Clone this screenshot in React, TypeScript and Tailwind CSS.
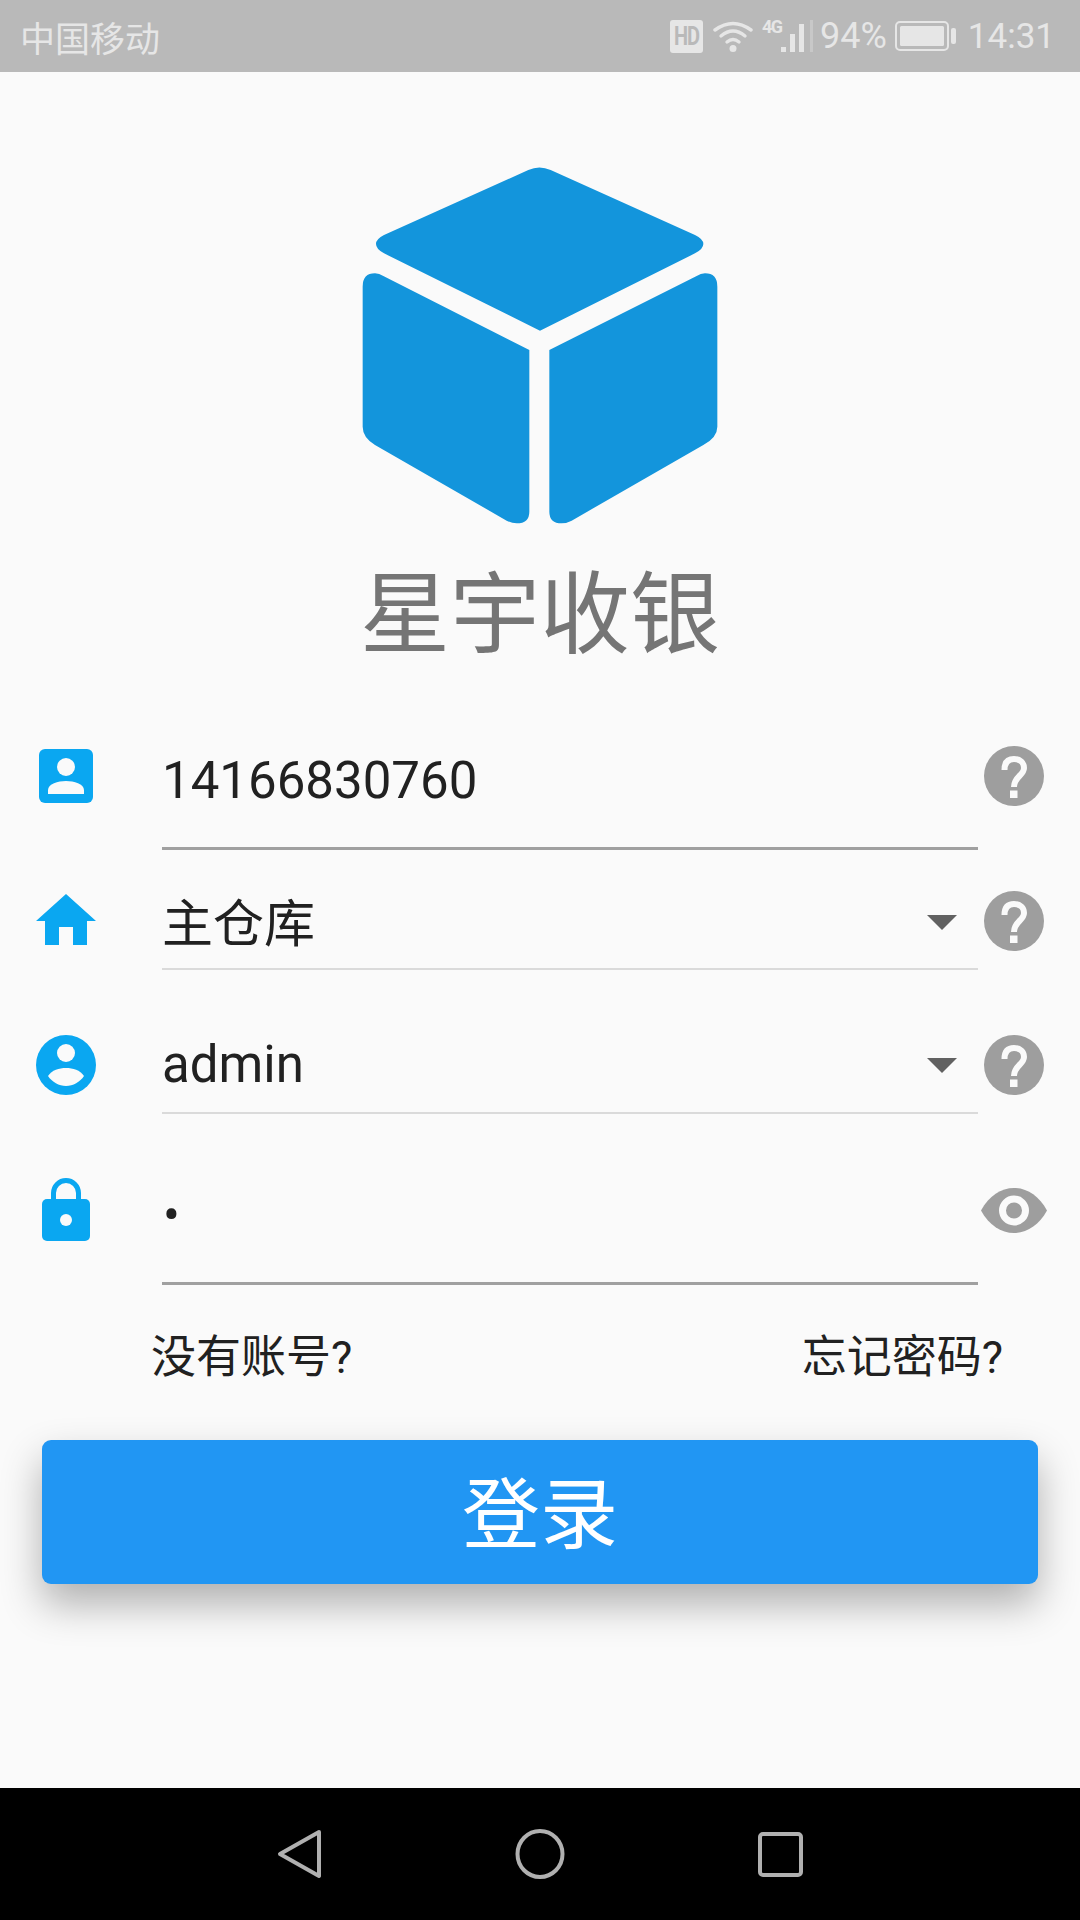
const cjk = "font-['Roboto','Noto_Sans_CJK_SC',sans-serif]";

function Question() {
  return (
    <svg width="60" height="60" viewBox="0 0 60 60" className="shrink-0">
      <circle cx="30" cy="30" r="30" fill="#9e9e9e" />
      <path d="M20.5 24C20.5 16 24.5 13 30 13C36 13 40 16.5 40 22C40 29.5 30 30.5 30 41" fill="none" stroke="#fafafa" strokeWidth="6" />
      <rect x="26" y="44.5" width="7.5" height="7.5" fill="#fafafa" />
    </svg>
  );
}

function Arrow() {
  return (
    <svg width="30" height="15" viewBox="0 0 30 15" className="shrink-0">
      <path d="M0 0H30L15 15Z" fill="#616161" />
    </svg>
  );
}

function Logo() {
  return (
    <svg width="400" height="400" viewBox="0 0 1200 1200">
      <g fill="#1395dc">
        <path d="M565 60Q598 45 632 60L1065 255Q1090 267 1090 282Q1090 297 1065 310L600 542L132 310Q108 297 108 282Q108 267 132 255Z" />
        <path d="M68 410Q68 370 105 370Q118 370 130 378L568 600V1085Q568 1120 530 1120Q515 1120 500 1112L105 885Q68 862 68 830Z" />
        <path d="M1132 410Q1132 370 1095 370Q1082 370 1070 378L628 600V1085Q628 1120 665 1120Q680 1120 695 1112L1090 885Q1132 862 1132 830Z" />
      </g>
    </svg>
  );
}

export default function App() {
  return (
    <div className={`flex h-[1920px] w-[1080px] flex-col overflow-hidden bg-[#fafafa] ${cjk}`}>
      <div className="flex h-[72px] shrink-0 items-center bg-[#b9b9b9] text-[#e6e6e6]">
        <span className="ml-[20px] text-[35px] leading-none font-['Noto_Sans_CJK_SC',sans-serif]">中国移动</span>
        <div className="ml-auto flex items-center">
          <div className="flex h-[33px] w-[33px] items-center justify-center rounded-[3px] bg-[#e6e6e6] font-['Roboto',sans-serif] text-[20px] font-bold leading-none tracking-[-1px] text-[#b9b9b9]">
            <span className="inline-block scale-y-125">HD</span>
          </div>
          <svg width="40" height="32" viewBox="0 0 40 32" className="ml-[10px]">
            <g fill="none" stroke="#e6e6e6" strokeWidth="3.4" strokeLinecap="round">
              <path d="M2 10Q20 -3 38 10" />
              <path d="M8 16Q20 6 32 16" />
              <path d="M14 22Q20 17 26 22" />
            </g>
            <circle cx="20" cy="28.5" r="3.5" fill="#e6e6e6" />
          </svg>
          <div className="relative ml-[9px] h-[36px] w-[52px]">
            <span className="absolute left-0 top-0 font-['Roboto',sans-serif] text-[18px] font-bold leading-none tracking-[-1.5px]">4G</span>
            <svg width="33" height="32" viewBox="0 0 33 32" className="absolute bottom-[2px] right-0">
              <rect x="0" y="27" width="5" height="5" fill="#e6e6e6" />
              <rect x="9" y="14" width="5" height="18" fill="#e6e6e6" />
              <rect x="18" y="4" width="5" height="28" fill="#e6e6e6" />
              <rect x="29" y="0" width="3" height="32" fill="#c8c8c8" />
            </svg>
          </div>
          <span className="ml-[6px] font-['Roboto',sans-serif] text-[36px] leading-none">94%</span>
          <svg width="62" height="30" viewBox="0 0 62 30" className="ml-[8px]">
            <rect x="1" y="1" width="52" height="28" rx="4" fill="none" stroke="#e6e6e6" strokeWidth="2" />
            <rect x="5" y="5" width="44" height="20" rx="1.5" fill="#e6e6e6" />
            <rect x="56" y="7" width="5" height="16" rx="2" fill="#e6e6e6" />
          </svg>
          <span className="ml-[11px] mr-[25px] font-['Roboto',sans-serif] text-[35px] leading-none">14:31</span>
        </div>
      </div>

      <main className="flex-1">
        <div className="mt-[78px] flex justify-center">
          <Logo />
        </div>
        <h1 className="mt-[21px] text-center text-[90px] font-normal leading-[90px] text-[#757575]">星宇收银</h1>

        <div className="mt-[68px] flex h-[121px] items-start">
          <div className="flex w-[132px] justify-center pt-[20px]">
            <svg width="54" height="54" viewBox="0 0 54 54">
              <rect width="54" height="54" rx="6" fill="#0aa7f1" />
              <circle cx="27" cy="18" r="9" fill="#fafafa" />
              <path d="M9 45V41C9 35 19 32 27 32C35 32 45 35 45 41V45Z" fill="#fafafa" />
            </svg>
          </div>
          <div className="ml-[30px] h-full w-[816px] border-b-[3px] border-[#a0a0a0] pt-[22px] text-[51px] leading-[60px] text-[#212121]">14166830760</div>
          <div className="flex w-[72px] justify-center pt-[17px]"><Question /></div>
        </div>

        <div className="flex h-[120px] items-start">
          <div className="flex w-[132px] justify-center pt-[44px]">
            <svg width="60" height="51" viewBox="0 0 60 51">
              <path d="M30 0L60 27H51V51H37V33H23V51H9V27H0Z" fill="#0aa7f1" />
            </svg>
          </div>
          <div className="ml-[30px] flex h-full w-[816px] items-start border-b-2 border-[#dadada] text-[51px] leading-[60px] text-[#212121]">
            <span className="mt-[45px]">主仓库</span>
            <div className="ml-auto mr-[21px] mt-[65px]"><Arrow /></div>
          </div>
          <div className="flex w-[72px] justify-center pt-[41px]"><Question /></div>
        </div>

        <div className="flex h-[144px] items-start">
          <div className="flex w-[132px] justify-center pt-[65px]">
            <svg width="60" height="60" viewBox="0 0 60 60">
              <circle cx="30" cy="30" r="30" fill="#0aa7f1" />
              <circle cx="30" cy="18" r="9" fill="#fafafa" />
              <path d="M12 41C16 35 23 33 30 33C37 33 44 35 48 41C44 47 37 51 30 51C23 51 16 47 12 41Z" fill="#fafafa" />
            </svg>
          </div>
          <div className="ml-[30px] flex h-full w-[816px] items-start border-b-2 border-[#dadada] text-[51px] leading-[60px] text-[#212121]">
            <span className="mt-[65px]">admin</span>
            <div className="ml-auto mr-[21px] mt-[88px]"><Arrow /></div>
          </div>
          <div className="flex w-[72px] justify-center pt-[65px]"><Question /></div>
        </div>

        <div className="flex h-[171px] items-start">
          <div className="flex w-[132px] justify-center pt-[64px]">
            <svg width="48" height="63" viewBox="0 0 48 63">
              <path d="M11.5 23V15A12.5 12.5 0 0 1 36.5 15V23" fill="none" stroke="#0aa7f1" strokeWidth="5" />
              <rect y="21" width="48" height="42" rx="5" fill="#0aa7f1" />
              <circle cx="24" cy="42" r="6" fill="#fafafa" />
            </svg>
          </div>
          <div className="ml-[30px] h-full w-[816px] border-b-[3px] border-[#a0a0a0] pl-[1px] pt-[71px] text-[50px] leading-[60px] text-[#212121]">•</div>
          <div className="flex w-[72px] justify-center pt-[74px]">
            <svg width="66" height="45" viewBox="0 0 66 45" className="shrink-0">
              <path d="M0 22.5C8 8 20 0 33 0C46 0 58 8 66 22.5C58 37 46 45 33 45C20 45 8 37 0 22.5Z" fill="#9e9e9e" />
              <circle cx="33" cy="22.5" r="11.5" fill="none" stroke="#fafafa" strokeWidth="7" />
            </svg>
          </div>
        </div>

        <div className="mt-[43px] flex justify-between pl-[151px] pr-[77px] text-[45px] leading-[60px] text-[#212121]">
          <span>没有账号?</span>
          <span>忘记密码?</span>
        </div>

        <button className="mx-[42px] mt-[52px] flex h-[144px] w-[996px] items-center justify-center rounded-[9px] bg-[#2196f3] pt-[10px] text-[78px] leading-none text-white shadow-[0_20px_40px_rgba(0,0,0,0.3)]">登录</button>
      </main>

      <div className="flex h-[132px] shrink-0 items-center justify-center gap-[192px] bg-black pb-[1px]">
        <svg width="44" height="52" viewBox="0 0 44 52">
          <path d="M42 4L3 26L42 48Z" fill="none" stroke="#b0b0b0" strokeWidth="4" strokeLinejoin="round" />
        </svg>
        <svg width="52" height="52" viewBox="0 0 52 52">
          <ellipse cx="27" cy="26" rx="22.5" ry="23" fill="none" stroke="#b0b0b0" strokeWidth="4" />
        </svg>
        <svg width="46" height="46" viewBox="0 0 46 46">
          <rect x="3" y="3" width="41" height="41" rx="3" fill="none" stroke="#b0b0b0" strokeWidth="4" />
        </svg>
      </div>
    </div>
  );
}
